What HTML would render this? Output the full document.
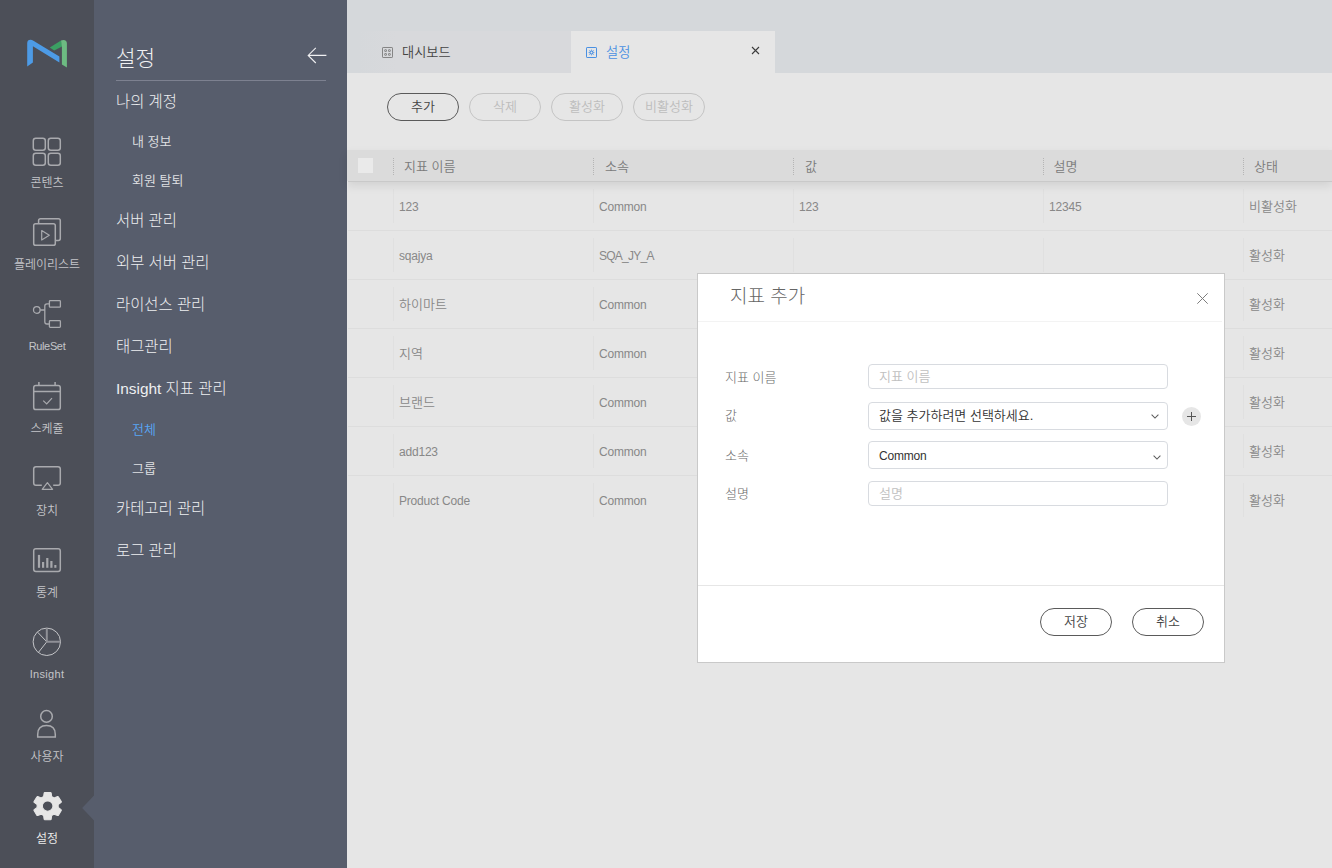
<!DOCTYPE html>
<html lang="ko">
<head>
<meta charset="utf-8">
<title>설정</title>
<style>
*{box-sizing:border-box;margin:0;padding:0}
html,body{width:1332px;height:868px;overflow:hidden}
body{position:relative;background:#e6e6e6;font-family:"Liberation Sans","Noto Sans CJK KR",sans-serif;color:#666;font-size:12px;font-weight:350}
.abs{position:absolute}
#rail{position:absolute;left:0;top:0;width:94px;height:868px;background:#4c4f58}
#side{position:absolute;left:94px;top:0;width:253px;height:868px;background:#575d6c}
#main{position:absolute;left:347px;top:0;width:985px;height:868px;background:#e6e6e6}
#tabbar{position:absolute;left:0;top:0;width:985px;height:73px;background:#d5d8db}
.rail-item{position:absolute;left:0;width:94px;text-align:center;color:#c8c9cc;font-size:12px;line-height:14px}
.rail-item svg{display:block;margin:0 auto}
.rail-label{position:absolute;left:0;width:94px;text-align:center;color:#c4c5c9;font-size:12px;line-height:14px}
.m1{position:absolute;left:22px;color:#eeeff1;font-weight:300;font-size:15.4px;line-height:20px;white-space:nowrap}
.m2{position:absolute;left:38px;margin-top:0.5px;color:#e0e1e4;font-size:13px;line-height:18px;white-space:nowrap}
.btn{position:absolute;height:28px;border:1px solid #5a5a5a;border-radius:14px;text-align:center;font-size:13px;line-height:25px;color:#444}
.btn.dis{border-color:#c4c4c4;color:#bdbdbd}
.th{position:absolute;top:0;height:31px;line-height:33px;font-size:13px;color:#7a7a7a;white-space:nowrap}
.sep{position:absolute;top:8px;width:0;height:17px;border-left:1px dotted #b5b5b5}
.row{position:absolute;left:0;width:985px;height:49px;border-bottom:1px solid #dddddd}
.td{position:absolute;top:0;height:48px;line-height:50px;font-size:12px;color:#888;white-space:nowrap;letter-spacing:-0.2px}
.td.k{font-size:13px;letter-spacing:0}
.row:last-of-type{border-bottom-color:transparent}
.vsep{position:absolute;top:7px;width:1px;height:34px;background:#e0e0e0}
#modal{position:absolute;left:697px;top:273px;width:528px;height:390px;background:#fff;border:1px solid #c9c9c9}
.lbl{position:absolute;left:27px;font-size:13px;color:#6a6a6a;font-weight:300;line-height:18px;white-space:nowrap}
.inp{position:absolute;overflow:hidden;left:170px;width:300px;border:1px solid #d8dbe0;border-radius:4px;background:#fff;font-size:13px;white-space:nowrap}
</style>
</head>
<body>
<div id="rail">
<svg class="abs" style="left:26px;top:38px" width="44" height="32" viewBox="0 0 44 32">
  <path d="M1.2 28.4 V5.2 Q1.2 1.8 4.6 1.8 Q6 1.8 7.4 2.7 L33.4 18.4 V24.6 L6.9 8.3 V24.6 Z" fill="#4d9be6"/>
  <path d="M23.8 9.4 L35 2.6 L36.5 8.2 L28.2 12.4 Z" fill="#3ba063"/>
  <path d="M35 2.6 Q36 1.9 37.4 1.9 Q40.9 1.9 40.9 5.4 V29.6 L35.9 26.4 V8.4 Z" fill="#6dbb82"/>
</svg>
<!-- contents -->
<svg class="abs" style="left:32px;top:137.4px" width="30" height="30" viewBox="0 0 30 30" fill="none" stroke="#a9aaae" stroke-width="1.5">
  <rect x="1.3" y="1.3" width="12" height="12" rx="2.5"/><rect x="16.3" y="1.3" width="12" height="12" rx="2.5"/>
  <rect x="1.3" y="16.3" width="12" height="12" rx="2.5"/><rect x="16.3" y="16.3" width="12" height="12" rx="2.5"/>
</svg>
<div class="rail-label" style="top:175.5px">콘텐츠</div>
<!-- playlist -->
<svg class="abs" style="left:32px;top:217px" width="30" height="30" viewBox="0 0 30 30" fill="none" stroke="#a9aaae" stroke-width="1.5" stroke-linejoin="round">
  <path d="M6.6 6.4 V3.6 Q6.6 1.7 8.5 1.7 H26.4 Q28.3 1.7 28.3 3.6 V21.6 Q28.3 23.5 26.4 23.5 H23.6"/>
  <rect x="1.7" y="6.7" width="21.6" height="21.6" rx="1.9"/>
  <path d="M9.7 13.5 L17.3 18.3 L9.7 23 Z" stroke-width="1.2"/>
</svg>
<div class="rail-label" style="top:257.5px">플레이리스트</div>
<!-- ruleset -->
<svg class="abs" style="left:32px;top:299px" width="30" height="30" viewBox="0 0 30 30" fill="none" stroke="#a9aaae" stroke-width="1.3">
  <circle cx="4.8" cy="11" r="3.3"/>
  <rect x="17.4" y="1.6" width="11" height="6.6" rx="0.8"/>
  <rect x="17.4" y="21.7" width="11" height="6.6" rx="0.8"/>
  <path d="M8.2 11 H12.8 M17.4 4.9 H15 Q12.8 4.9 12.8 7.1 V22.8 Q12.8 25 15 25 H17.4"/>
</svg>
<div class="rail-label" style="top:338.5px;font-size:11px;letter-spacing:-0.35px">RuleSet</div>
<!-- schedule -->
<svg class="abs" style="left:32px;top:381px" width="30" height="30" viewBox="0 0 30 30" fill="none" stroke="#a9aaae" stroke-width="1.5">
  <rect x="1.7" y="4.6" width="26.6" height="24" rx="2.2"/>
  <path d="M1.7 10.6 H28.3 M6.9 1 V4.6 M23.1 1 V4.6"/>
  <path d="M11.2 19.6 L14.7 22.9 L20 17.2" stroke-width="1.2"/>
</svg>
<div class="rail-label" style="top:421.5px">스케쥴</div>
<!-- device -->
<svg class="abs" style="left:32px;top:464px" width="30" height="30" viewBox="0 0 30 30" fill="none" stroke="#a9aaae" stroke-width="1.5">
  <path d="M9.8 21.2 H4 Q1.7 21.2 1.7 18.9 V5 Q1.7 2.7 4 2.7 H26 Q28.3 2.7 28.3 5 V18.9 Q28.3 21.2 26 21.2 H21.2"/>
  <path d="M15.4 18.6 L20.6 25.3 H10.2 Z" stroke-width="1.2" stroke-linejoin="round"/>
</svg>
<div class="rail-label" style="top:503.5px">장치</div>
<!-- stats -->
<svg class="abs" style="left:32px;top:546px" width="30" height="30" viewBox="0 0 30 30" fill="none" stroke="#a9aaae" stroke-width="1.5">
  <rect x="1.7" y="2.7" width="26.6" height="22.8" rx="2.2"/>
  <g fill="#a6a7ab" stroke="none"><rect x="5.9" y="8.9" width="2.2" height="12.9"/><rect x="10" y="16" width="2.2" height="5.8"/><rect x="14.2" y="12" width="2.2" height="9.8"/><rect x="18.3" y="15" width="2.2" height="6.8"/><rect x="22.3" y="19" width="2.1" height="2.8"/></g>
</svg>
<div class="rail-label" style="top:585.5px">통계</div>
<!-- insight -->
<svg class="abs" style="left:32px;top:627px" width="30" height="30" viewBox="0 0 30 30" fill="none" stroke="#c4c5c8" stroke-width="1">
  <circle cx="14.8" cy="14.8" r="13.7"/>
  <path d="M14.8 14.8 L5.6 5.2 M14.8 14.8 L6.6 25.2"/>
  <path d="M14.8 1.6 V14.8 H28.2" stroke="#8f9096" stroke-width="2"/>
</svg>
<div class="rail-label" style="top:666.5px;font-size:11px;letter-spacing:0.3px">Insight</div>
<!-- user -->
<svg class="abs" style="left:32px;top:709px" width="30" height="30" viewBox="0 0 30 30" fill="none" stroke="#a9aaae" stroke-width="1.5">
  <circle cx="14.5" cy="7.4" r="5.8"/>
  <path d="M5.7 28 V25.4 Q5.7 16.6 14.5 16.6 Q23.3 16.6 23.3 25.4 V28 Z" stroke-linejoin="miter"/>
</svg>
<div class="rail-label" style="top:749.5px">사용자</div>
<!-- settings -->
<svg class="abs" style="left:29.8px;top:789px" width="35.3" height="34.13" viewBox="0 0 24 24" preserveAspectRatio="none"><path fill="#e6e6e6" stroke="#e6e6e6" stroke-width="0.7" stroke-linejoin="round" d="M19.14,12.94c0.04-0.3,0.06-0.61,0.06-0.94c0-0.32-0.02-0.64-0.07-0.94l2.03-1.58c0.18-0.14,0.23-0.41,0.12-0.61 l-1.92-3.32c-0.12-0.22-0.37-0.29-0.59-0.22l-2.39,0.96c-0.5-0.38-1.03-0.7-1.62-0.94L14.4,2.81c-0.04-0.24-0.24-0.41-0.48-0.41 h-3.84c-0.24,0-0.43,0.17-0.47,0.41L9.25,5.35C8.66,5.59,8.12,5.92,7.63,6.29L5.24,5.33c-0.22-0.08-0.47,0-0.59,0.22L2.74,8.87 C2.62,9.08,2.66,9.34,2.86,9.48l2.03,1.58C4.84,11.36,4.8,11.69,4.8,12s0.02,0.64,0.07,0.94l-2.03,1.58 c-0.18,0.14-0.23,0.41-0.12,0.61l1.92,3.32c0.12,0.22,0.37,0.29,0.59,0.22l2.39-0.96c0.5,0.38,1.03,0.7,1.62,0.94l0.36,2.54 c0.05,0.24,0.24,0.41,0.48,0.41h3.84c0.24,0,0.44-0.17,0.47-0.41l0.36-2.54c0.59-0.24,1.13-0.56,1.62-0.94l2.39,0.96 c0.22,0.08,0.47,0,0.59-0.22l1.92-3.32c0.12-0.22,0.07-0.47-0.12-0.61L19.14,12.94z M12,15.6c-1.98,0-3.6-1.62-3.6-3.6 s1.62-3.6,3.6-3.6s3.6,1.62,3.6,3.6S13.98,15.6,12,15.6z"/></svg>
<div class="rail-label" style="top:831.5px;color:#ececec">설정</div>
<svg class="abs" style="left:82px;top:795px" width="12" height="26" viewBox="0 0 12 26"><path d="M12 0.6 L0.2 13 L12 25.4 Z" fill="#575d6c"/></svg>
</div>
<div id="side">
<div class="abs" style="left:22px;top:43.5px;font-size:21.3px;font-weight:300;line-height:30px;color:#f0f0f2">설정</div>
<svg class="abs" style="left:213px;top:47px" width="20" height="17" viewBox="0 0 20 17" fill="none" stroke="#f0f0f2" stroke-width="1.1"><path d="M1.2 8.4 H19.4 M8.8 0.8 L1.2 8.4 L8.8 16"/></svg>
<div class="abs" style="left:22px;top:80px;width:210px;height:1px;background:#7d8190"></div>
<div class="m1" style="top:91.5px">나의 계정</div>
<div class="m2" style="top:132px">내 정보</div>
<div class="m2" style="top:171px">회원 탈퇴</div>
<div class="m1" style="top:211px">서버 관리</div>
<div class="m1" style="top:253px">외부 서버 관리</div>
<div class="m1" style="top:295px">라이선스 관리</div>
<div class="m1" style="top:337px">태그관리</div>
<div class="m1" style="top:379px">Insight 지표 관리</div>
<div class="m2" style="top:420px;color:#58a6f5">전체</div>
<div class="m2" style="top:459px">그룹</div>
<div class="m1" style="top:499px">카테고리 관리</div>
<div class="m1" style="top:541px">로그 관리</div>
</div>
<div id="main">
  <div id="tabbar">
    <div class="abs" style="left:10px;top:31px;width:214px;height:42px;background:linear-gradient(to right,rgba(216,217,220,0),#d8d9dc 40px)"></div>
    <div class="abs" style="left:224px;top:31px;width:204px;height:42px;background:#e6e6e6"></div>
    <svg class="abs" style="left:35px;top:47px" width="11" height="11" viewBox="0 0 11 11" fill="none" stroke="#858585" stroke-width="1"><rect x="0.5" y="0.5" width="10" height="10" rx="0.6"/><rect x="2.7" y="2.7" width="1.8" height="1.8" rx="0.3" stroke-width="0.9"/><rect x="6.5" y="2.7" width="1.8" height="1.8" rx="0.3" stroke-width="0.9"/><rect x="2.7" y="6.5" width="1.8" height="1.8" rx="0.3" stroke-width="0.9"/><rect x="6.5" y="6.5" width="1.8" height="1.8" rx="0.3" stroke-width="0.9"/></svg>
    <div class="abs" style="left:55px;top:43px;font-size:13.2px;line-height:20px;color:#444;white-space:nowrap">대시보드</div>
    <svg class="abs" style="left:239px;top:47px" width="11" height="11" viewBox="0 0 11 11" fill="none" stroke="#4a90e2" stroke-width="1"><rect x="0.5" y="0.5" width="10" height="10" rx="0.6"/><circle cx="5.5" cy="5.5" r="1.5" stroke-width="1.1"/><path d="M5.5 2.7V3.6M5.5 7.4V8.3M2.7 5.5H3.6M7.4 5.5H8.3M3.5 3.5L4.1 4.1M6.9 6.9L7.5 7.5M3.5 7.5L4.1 6.9M6.9 4.1L7.5 3.5" stroke-width="1"/></svg>
    <div class="abs" style="left:259px;top:43px;font-size:13.2px;line-height:20px;color:#4a90e2;white-space:nowrap">설정</div>
    <svg class="abs" style="left:404px;top:46px" width="9" height="9" viewBox="0 0 9 9" stroke="#3c3c3c" stroke-width="1.1"><path d="M1 1L8 8M8 1L1 8"/></svg>
  </div>
  <div class="btn" style="left:40px;top:93px;width:72px">추가</div>
  <div class="btn dis" style="left:122px;top:93px;width:72px">삭제</div>
  <div class="btn dis" style="left:204px;top:93px;width:72px">활성화</div>
  <div class="btn dis" style="left:286px;top:93px;width:72px">비활성화</div>
  <div id="thead" class="abs" style="left:0;top:150px;width:985px;height:32px;background:#dbdbdb;border-bottom:1px solid #c9c9c9;box-shadow:0 4px 9px rgba(0,0,0,0.09);z-index:2">
    <div class="abs" style="left:11px;top:8px;width:15px;height:15px;background:#eaeaea"></div>
    <div class="sep" style="left:46px"></div><div class="th" style="left:57px">지표 이름</div>
    <div class="sep" style="left:246px"></div><div class="th" style="left:258px">소속</div>
    <div class="sep" style="left:446px"></div><div class="th" style="left:458px">값</div>
    <div class="sep" style="left:696px"></div><div class="th" style="left:706.5px">설명</div>
    <div class="sep" style="left:896px"></div><div class="th" style="left:907px">상태</div>
  </div>
<div class="row" style="top:182px"><div class="vsep" style="left:46px"></div><div class="td" style="left:52px">123</div><div class="vsep" style="left:246px"></div><div class="td" style="left:252px">Common</div><div class="vsep" style="left:446px"></div><div class="td" style="left:452px">123</div><div class="vsep" style="left:696px"></div><div class="td" style="left:702px">12345</div><div class="vsep" style="left:896px"></div><div class="td k" style="left:902px">비활성화</div></div>
<div class="row" style="top:231px"><div class="vsep" style="left:46px"></div><div class="td" style="left:52px">sqajya</div><div class="vsep" style="left:246px"></div><div class="td" style="left:252px"><span style="letter-spacing:-0.75px">SQA_JY_A</span></div><div class="vsep" style="left:446px"></div><div class="td" style="left:452px"></div><div class="vsep" style="left:696px"></div><div class="td" style="left:702px"></div><div class="vsep" style="left:896px"></div><div class="td k" style="left:902px">활성화</div></div>
<div class="row" style="top:280px"><div class="vsep" style="left:46px"></div><div class="td k" style="left:52px">하이마트</div><div class="vsep" style="left:246px"></div><div class="td" style="left:252px">Common</div><div class="vsep" style="left:446px"></div><div class="td" style="left:452px"></div><div class="vsep" style="left:696px"></div><div class="td" style="left:702px"></div><div class="vsep" style="left:896px"></div><div class="td k" style="left:902px">활성화</div></div>
<div class="row" style="top:329px"><div class="vsep" style="left:46px"></div><div class="td k" style="left:52px">지역</div><div class="vsep" style="left:246px"></div><div class="td" style="left:252px">Common</div><div class="vsep" style="left:446px"></div><div class="td" style="left:452px"></div><div class="vsep" style="left:696px"></div><div class="td" style="left:702px"></div><div class="vsep" style="left:896px"></div><div class="td k" style="left:902px">활성화</div></div>
<div class="row" style="top:378px"><div class="vsep" style="left:46px"></div><div class="td k" style="left:52px">브랜드</div><div class="vsep" style="left:246px"></div><div class="td" style="left:252px">Common</div><div class="vsep" style="left:446px"></div><div class="td" style="left:452px"></div><div class="vsep" style="left:696px"></div><div class="td" style="left:702px"></div><div class="vsep" style="left:896px"></div><div class="td k" style="left:902px">활성화</div></div>
<div class="row" style="top:427px"><div class="vsep" style="left:46px"></div><div class="td" style="left:52px">add123</div><div class="vsep" style="left:246px"></div><div class="td" style="left:252px">Common</div><div class="vsep" style="left:446px"></div><div class="td" style="left:452px"></div><div class="vsep" style="left:696px"></div><div class="td" style="left:702px"></div><div class="vsep" style="left:896px"></div><div class="td k" style="left:902px">활성화</div></div>
<div class="row" style="top:476px"><div class="vsep" style="left:46px"></div><div class="td" style="left:52px">Product Code</div><div class="vsep" style="left:246px"></div><div class="td" style="left:252px">Common</div><div class="vsep" style="left:446px"></div><div class="td" style="left:452px"></div><div class="vsep" style="left:696px"></div><div class="td" style="left:702px"></div><div class="vsep" style="left:896px"></div><div class="td k" style="left:902px">활성화</div></div>
</div>
<div class="abs" style="left:347px;top:181px;width:1px;height:344px;background:#e6e6e6;z-index:3"></div>
<div id="modal">
  <div class="abs" style="left:32px;top:8px;font-size:19px;line-height:30px;color:#666;font-weight:300;white-space:nowrap">지표 추가</div>
  <svg class="abs" style="left:499px;top:19px" width="11" height="11" viewBox="0 0 11 11" stroke="#7d7d7d" stroke-width="1" fill="none"><path d="M0.3 0.3L10.7 10.7M10.7 0.3L0.3 10.7"/></svg>
  <div class="abs" style="left:0;top:47px;width:524px;height:1px;background:#f3f3f3"></div>
  <div class="lbl" style="top:94.5px">지표 이름</div>
  <div class="inp" style="top:90px;height:25px;line-height:23px;padding-left:10px;color:#c0c0c0">지표 이름</div>
  <div class="lbl" style="top:133px">값</div>
  <div class="inp" style="top:128px;height:28px;line-height:26px;padding-left:10px;color:#333">값을 추가하려면 선택하세요.</div>
  <svg class="abs" style="left:452.6px;top:140px" width="8" height="5" viewBox="0 0 8 5" fill="none" stroke="#5a5a5a" stroke-width="1.05"><path d="M0.6 0.6L4 4L7.4 0.6"/></svg>
  <div class="abs" style="left:484px;top:133px;width:19px;height:19px;border-radius:50%;background:#e6e6e6"></div>
  <svg class="abs" style="left:489px;top:138px" width="9" height="9" viewBox="0 0 9 9" stroke="#555" stroke-width="1"><path d="M4.5 0V9M0 4.5H9"/></svg>
  <div class="lbl" style="top:173px">소속</div>
  <div class="inp" style="top:167px;height:28px;line-height:29px;padding-left:10px;color:#333;font-size:12px;letter-spacing:-0.2px">Common</div>
  <svg class="abs" style="left:454.5px;top:180.8px" width="8" height="5" viewBox="0 0 8 5" fill="none" stroke="#5a5a5a" stroke-width="1.05"><path d="M0.6 0.6L4 4L7.4 0.6"/></svg>
  <div class="lbl" style="top:211px">설명</div>
  <div class="inp" style="top:207px;height:25px;line-height:24px;padding-left:10px;color:#c0c0c0">설명</div>
  <div class="abs" style="left:0;top:311px;width:526px;height:1px;background:#e6e6e6"></div>
  <div class="btn" style="left:342px;top:334px;width:72px">저장</div>
  <div class="btn" style="left:434px;top:334px;width:72px">취소</div>
</div>
</body>
</html>
